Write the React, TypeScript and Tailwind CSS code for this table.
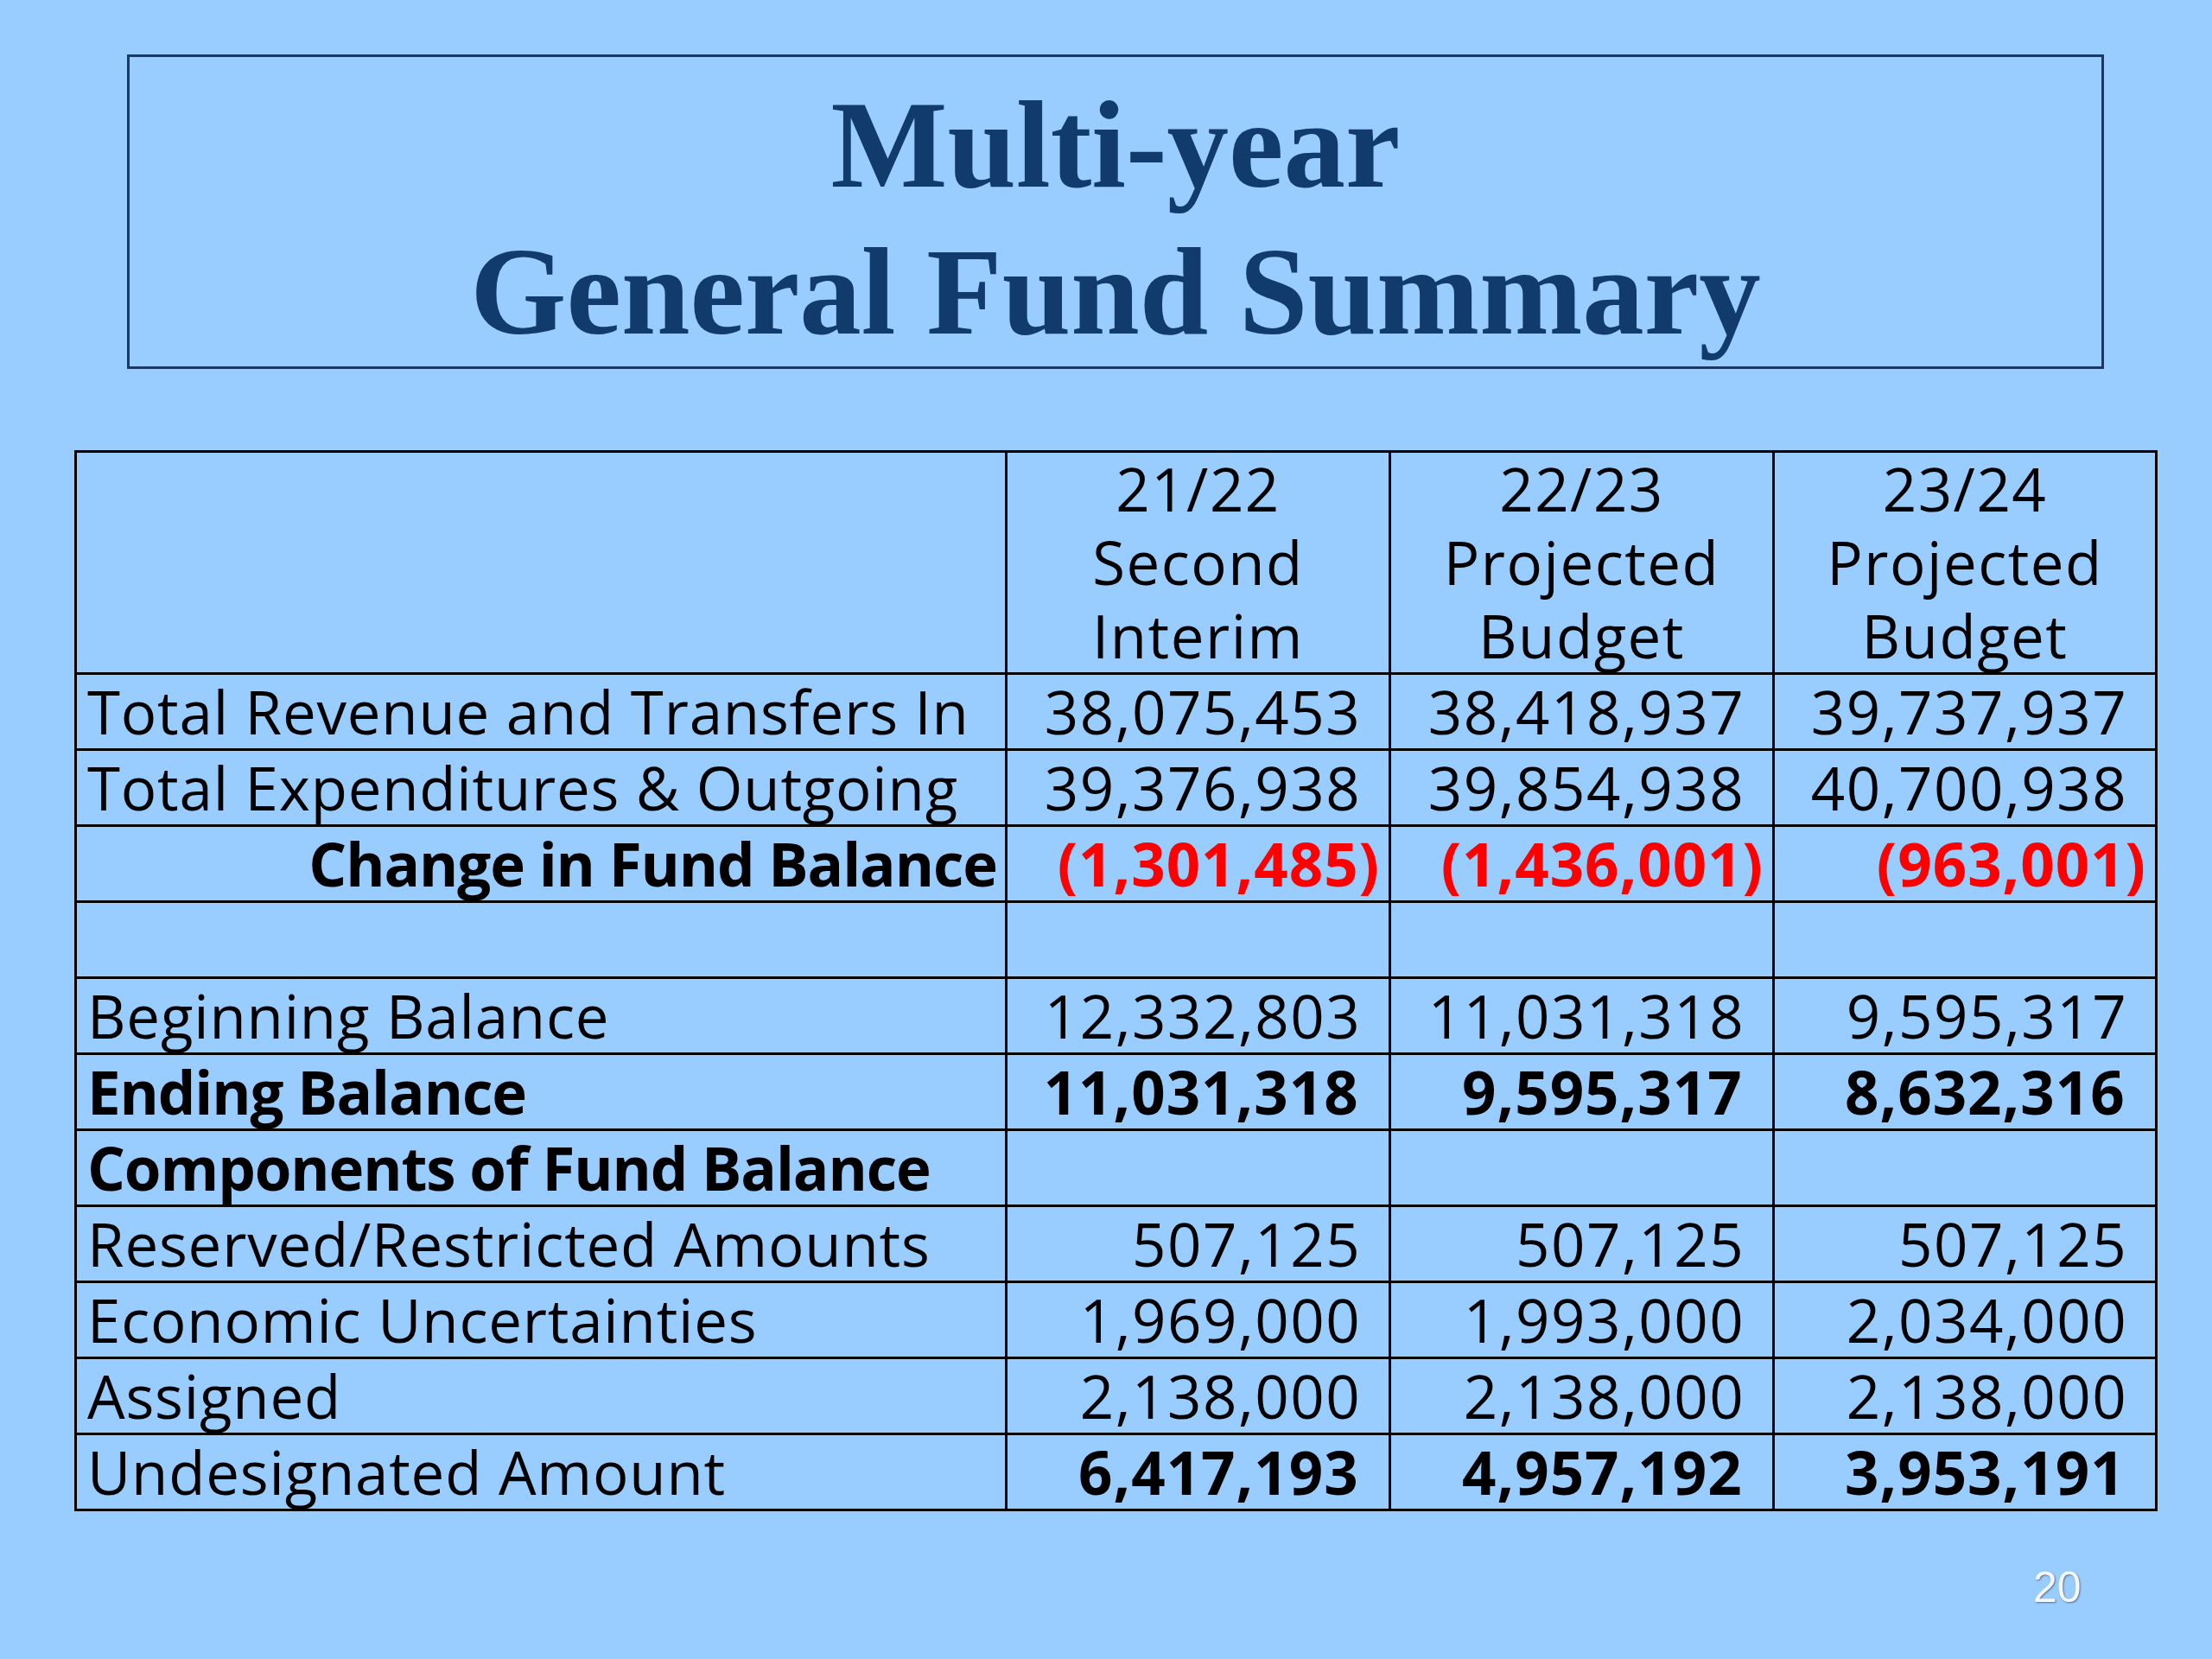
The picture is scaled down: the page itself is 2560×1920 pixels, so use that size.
import React from 'react';

type Row = {
  label: string;
  values: string[];
  labelBold?: boolean;
  valueBold?: boolean;
  alignRight?: boolean;
  red?: boolean;
};

const rows: Row[] = [
  { label: 'Total Revenue and Transfers In', values: ['38,075,453', '38,418,937', '39,737,937'] },
  { label: 'Total Expenditures & Outgoing', values: ['39,376,938', '39,854,938', '40,700,938'] },
  {
    label: 'Change in Fund Balance',
    values: ['(1,301,485)', '(1,436,001)', '(963,001)'],
    labelBold: true,
    valueBold: true,
    alignRight: true,
    red: true,
  },
  { label: '', values: ['', '', ''] },
  { label: 'Beginning Balance', values: ['12,332,803', '11,031,318', '9,595,317'] },
  { label: 'Ending Balance', values: ['11,031,318', '9,595,317', '8,632,316'], labelBold: true, valueBold: true },
  { label: 'Components of Fund Balance', values: ['', '', ''], labelBold: true },
  { label: 'Reserved/Restricted Amounts', values: ['507,125', '507,125', '507,125'] },
  { label: 'Economic Uncertainties', values: ['1,969,000', '1,993,000', '2,034,000'] },
  { label: 'Assigned', values: ['2,138,000', '2,138,000', '2,138,000'] },
  { label: 'Undesignated Amount', values: ['6,417,193', '4,957,192', '3,953,191'], valueBold: true },
];

const headers = [
  ['21/22', 'Second', 'Interim'],
  ['22/23', 'Projected', 'Budget'],
  ['23/24', 'Projected', 'Budget'],
];

const cell = 'bg-[#99ccff] h-[85px] leading-[85px] whitespace-nowrap overflow-visible';

const App: React.FC = () => {
  return (
    <div className="w-[2560px] h-[1920px] bg-[#99ccff] flex flex-col overflow-hidden">
      {/* Title */}
      <div className="ml-[147px] mt-[63px] w-[2288px] h-[364px] border-[3px] border-[#1a3963] pt-[17px] text-center text-[#113b6c] font-bold text-[143px] leading-[170px] font-['Liberation_Serif','Times_New_Roman',serif]">
        <div>Multi-year</div>
        <div>General Fund Summary</div>
      </div>

      {/* Table */}
      <div className="ml-[86px] mt-[94px] w-[2411px] grid grid-cols-[1074px_441px_441px_440px] gap-[3px] bg-black p-[3px] text-black text-[69px] font-['Open_Sans','Noto_Sans',sans-serif]">
        <div className="bg-[#99ccff] h-[254px]" />
        {headers.map((h, i) => (
          <div
            key={i}
            className="bg-[#99ccff] h-[254px] flex flex-col justify-end items-center leading-[85px] tracking-[1.5px]"
          >
            {h.map((line, j) => (
              <div key={j}>{line}</div>
            ))}
          </div>
        ))}

        {rows.map((r, i) => (
          <React.Fragment key={i}>
            <div
              className={`${cell} ${r.alignRight ? 'text-right pr-[9px]' : 'pl-[12px]'} ${
                r.labelBold ? 'font-bold tracking-[-1.1px]' : 'tracking-[0.8px]'
              }`}
            >
              {r.label}
            </div>
            {r.values.map((v, j) => (
              <div
                key={j}
                className={`${cell} text-right ${
                  r.valueBold ? 'font-bold tracking-[1px] pr-[10px]' : 'tracking-[1.5px] pr-[10px]'
                } ${r.red ? 'text-[#ff0000]' : ''}`}
              >
                {v}
                {v && !r.red && <span className="invisible">)</span>}
              </div>
            ))}
          </React.Fragment>
        ))}
      </div>

      {/* Slide number */}
      <div className="mt-[60px] ml-[2353px] w-[60px] text-[50px] leading-[56px] text-[#f4f8fc] font-['Liberation_Sans','Arial',sans-serif] [text-shadow:1px_1px_2px_#5c6f8a]">
        20
      </div>
    </div>
  );
};

export default App;
